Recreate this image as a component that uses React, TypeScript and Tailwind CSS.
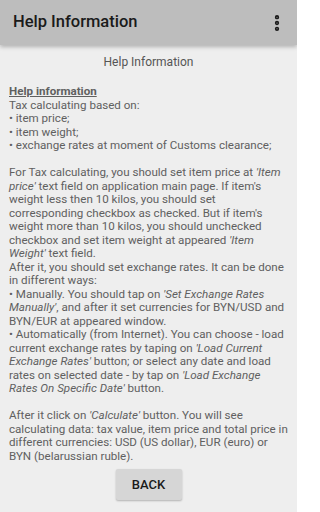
import { EllipsisVertical } from "lucide-react";

function AppBar() {
  return (
    <header className="relative z-10 flex h-[45px] items-center justify-between bg-[#bdbdbd] pl-[13px] pr-[10px] shadow-[0_2px_4px_rgba(0,0,0,0.25)]">
      <h1 className="text-[16.5px] font-medium text-[#1a1a1a]">Help Information</h1>
      <EllipsisVertical size={20} strokeWidth={3.2} className="text-[#1a1a1a]" />
    </header>
  );
}

function Q({ children }: { children: React.ReactNode }) {
  return <i>&#39;{children}&#39;</i>;
}

export default function App() {
  return (
    <div
      className="flex h-[512px] w-[297px] flex-col overflow-hidden bg-[#eeeeee]"
      style={{ fontFamily: "Roboto, 'Liberation Sans', sans-serif" }}
    >
      <AppBar />
      <main className="flex flex-1 flex-col">
        <p className="mt-[8px] text-center text-[12px] text-[#555555]">Help Information</p>

        <div className="mt-[14px] px-[9px] text-[11.6px] leading-[13.5px] text-[#606060]">
          <p className="font-bold underline">Help information</p>
          <p>Tax calculating based on:</p>
          <p>• item price;</p>
          <p>• item weight;</p>
          <p>• exchange rates at moment of Customs clearance;</p>
          <p className="mt-[13.5px]">
            For Tax calculating, you should set item price at <Q>Item price</Q> text field on
            application main page. If item&#39;s weight less then 10 kilos, you should set
            corresponding checkbox as checked. But if item&#39;s weight more than 10 kilos, you
            should unchecked checkbox and set item weight at appeared <Q>Item Weight</Q> text
            field.
          </p>
          <p>After it, you should set exchange rates. It can be done in different ways:</p>
          <p>
            • Manually. You should tap on <Q>Set Exchange Rates Manually</Q>, and after it set
            currencies for BYN/USD and BYN/EUR at appeared window.
          </p>
          <p>
            • Automatically (from Internet). You can choose - load current exchange rates by
            taping on <Q>Load Current Exchange Rates</Q> button; or select any date and load rates
            on selected date - by tap on <Q>Load Exchange Rates On Specific Date</Q> button.
          </p>
          <p className="mt-[13.5px]">
            After it click on <Q>Calculate</Q> button. You will see calculating data: tax value,
            item price and total price in different currencies: USD (US dollar), EUR (euro) or BYN
            (belarussian ruble).
          </p>
        </div>

        <div className="mt-[6px] flex justify-center">
          <button className="h-[31px] w-[66px] rounded-[2px] bg-[#d6d6d6] text-[13px] font-medium text-[#1a1a1a] shadow-[0_1px_2px_rgba(0,0,0,0.25)]">
            BACK
          </button>
        </div>
      </main>
    </div>
  );
}
